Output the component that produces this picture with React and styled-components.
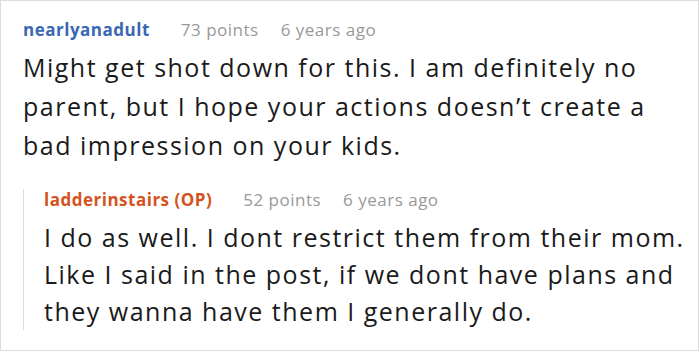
import React from "react";
import styled, { createGlobalStyle } from "styled-components";

const Global = createGlobalStyle`
  html, body {
    margin: 0;
    padding: 0;
    background: #fff;
  }
  body {
    font-family: "Open Sans", "Noto Sans", sans-serif;
  }
`;

const comments = [
  {
    user: "nearlyanadult",
    points: 73,
    time: "6 years ago",
    text: "Might get shot down for this. I am definitely no parent, but I hope your actions doesn’t create a bad impression on your kids.",
    replies: [
      {
        user: "ladderinstairs (OP)",
        op: true,
        points: 52,
        time: "6 years ago",
        text: "I do as well. I dont restrict them from their mom. Like I said in the post, if we dont have plans and they wanna have them I generally do.",
      },
    ],
  },
];

function Comment({ item, nested }) {
  return (
    <CommentBlock>
      <Meta>
        <UserName $op={item.op}>{item.user}</UserName>
        <MetaInfo>{item.points} points</MetaInfo>
        <MetaInfo>{item.time}</MetaInfo>
      </Meta>
      <Body $nested={nested}>{item.text}</Body>
      {item.replies?.map((r, i) => (
        <Reply key={i}>
          <Comment item={r} nested />
        </Reply>
      ))}
    </CommentBlock>
  );
}

export default function App() {
  return (
    <>
      <Global />
      <Frame>
        {comments.map((c, i) => (
          <Comment key={i} item={c} />
        ))}
      </Frame>
    </>
  );
}

const Frame = styled.div`
  width: 699px;
  height: 351px;
  box-sizing: border-box;
  border: 1px solid #dcdcdc;
  padding: 18px 0 0 22px;
  overflow: hidden;
`;

const CommentBlock = styled.div`
  display: flex;
  flex-direction: column;
`;

const Meta = styled.div`
  display: flex;
  align-items: baseline;
  gap: 22px;
  font-size: 17px;
  line-height: 22px;
  letter-spacing: 0.5px;
`;

const UserName = styled.span`
  font-weight: 700;
  margin-right: 9px;
  color: ${(p) => (p.$op ? "#d5521d" : "#3a67b5")};
`;

const MetaInfo = styled.span`
  color: #999;
`;

const Body = styled.div`
  margin-top: ${(p) => (p.$nested ? "8px" : "7px")};
  max-width: 645px;
  font-size: 25px;
  line-height: ${(p) => (p.$nested ? "37px" : "39px")};
  letter-spacing: 1.5px;
  color: #1a1a1a;
`;

const Reply = styled.div`
  margin-top: 24px;
  border-left: 1px solid #dcdcdc;
  padding-left: 20px;
`;
